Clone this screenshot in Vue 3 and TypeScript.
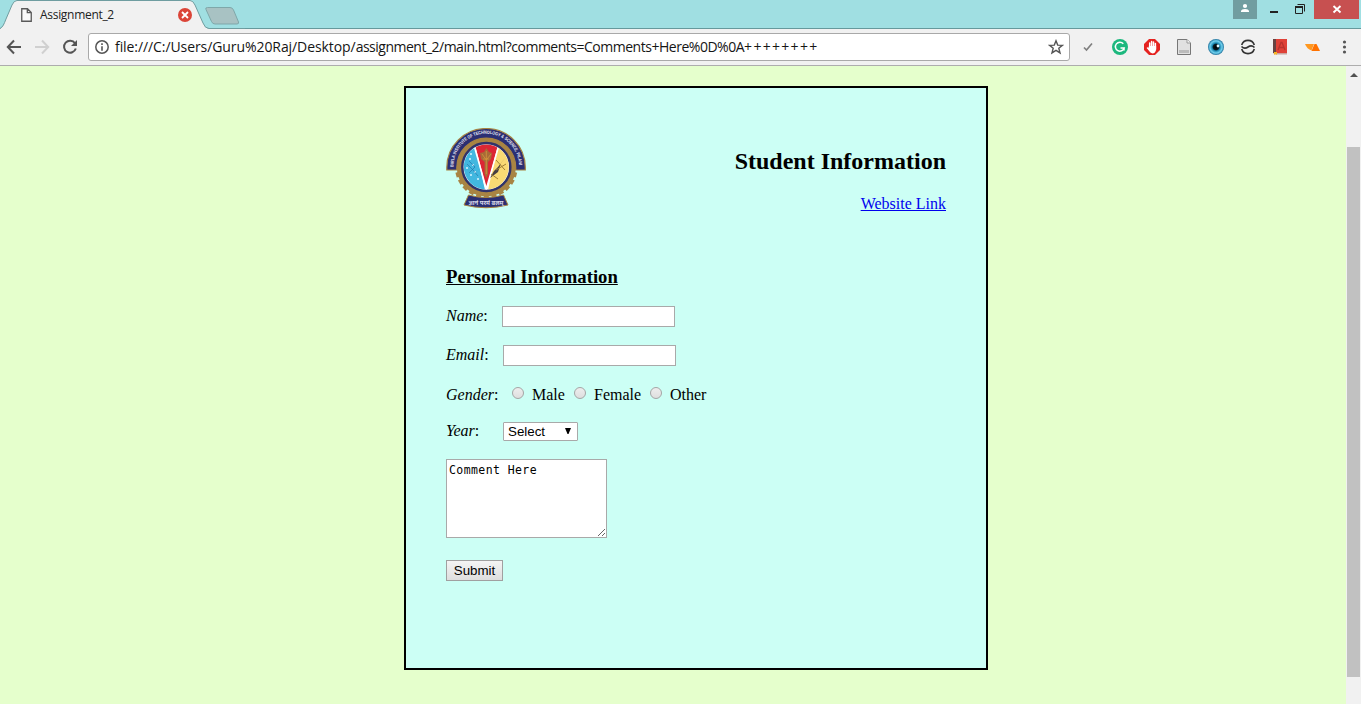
<script setup lang="ts">
import { ref } from 'vue'

const name = ref('')
const email = ref('')
const gender = ref('')
const comment = ref('Comment Here')
const genders: string[] = ['Male', 'Female', 'Other']
const teeth: number[] = Array.from({ length: 24 }, (_, i) => i * 15)
const url = {
  folder: 'file:///C:/Users/Guru%20Raj/Desktop/',
  file: 'assignment_2/main.html?comments=',
  value: 'Comments+Here%0D%0A',
  tail: '++++++++'
}
</script>

<template>
  <div class="window">
    <header class="titlebar">
      <div class="tab">
        <svg class="tab-shape" width="245" height="29" viewBox="0 0 245 29">
          <path d="M0 29 C3 27 4 24 6 19 L12 5 Q14 .5 17 .5 H190 Q193 .5 195 5 L203 23 Q205 28.500 209 28.500 L209 30 H0Z" fill="#f1f1f1" />
          <path d="M0 28.500 C3 27 4 24 6 19 L12 5 Q14 .5 17 .5 H190 Q193 .5 195 5 L203 23 Q205 28.500 209 28.500 H245" fill="none" stroke="#6f9da0" />
          <path d="M207.500 7.500 H230 Q232.500 7.500 233.500 10 L238.500 22 Q239 24 237 24 H215 Q212.500 24 211.500 21.500 L206 9.500 Q205 7.500 207.500 7.500Z" fill="#a8c2c3" stroke="#7fa7a9" />
        </svg>
        <svg class="page-icon" width="11" height="15" viewBox="0 0 11 15"><path d="M.75 .75 H6.500 L10.250 4.500 V13.250 H.75Z M6.300 .75 V4.700 H10.250" fill="#fafafa" stroke="#595959" stroke-width="1.300" /></svg>
        <span class="tab-title">Assignment_2</span>
        <svg class="tab-close" width="14" height="14" viewBox="0 0 14 14"><circle cx="7" cy="7" r="7" fill="#db4437" /><path d="M4 4 L10 10 M10 4 L4 10" stroke="#fff" stroke-width="1.800" /></svg>
      </div>
      <div class="controls">
        <div class="person"><svg width="24" height="19" viewBox="0 0 24 19"><circle cx="12" cy="6" r="2.100" fill="#fff" /><path d="M8 12 V11 Q8.500 9 12 9 T16 11 V12Z" fill="#fff" /></svg></div>
        <svg width="57" height="19" viewBox="0 0 57 19"><path d="M13 11 H21 V13 H13Z" fill="#222" /><path d="M38.500 6.500 H45.500 V13.500 H38.500Z M40.500 4.500 H47.500 V11.500" fill="none" stroke="#222" /><path d="M38 6 H46 V8 H38Z" fill="#222" /></svg>
        <div class="close"><svg width="45" height="19" viewBox="0 0 45 19"><path d="M19.500 6 L26.500 12.500 M26.500 6 L19.500 12.500" stroke="#fff" stroke-width="1.900" /></svg></div>
      </div>
    </header>

    <nav class="toolbar">
      <svg class="nav-icons" width="88" height="36" viewBox="0 0 88 36" fill="none" stroke-width="2">
        <path d="M21 18 H8 M14 11.500 L7.800 18 L14 24.500" stroke="#555" />
        <path d="M35 18 H48 M42 11.500 L48.200 18 L42 24.500" stroke="#d0d0d0" />
        <path d="M75 14.300 A6 6 0 1 0 75.800 19.500" stroke="#555" /><path d="M77 11 V17 H71Z" fill="#555" />
      </svg>
      <div class="omnibox">
        <svg class="info" width="14" height="14" viewBox="0 0 14 14"><circle cx="7" cy="7" r="6.200" fill="none" stroke="#555" stroke-width="1.500" /><path d="M6.200 6.200 H7.800 V10.700 H6.200Z M6.200 3.300 H7.800 V5 H6.200Z" fill="#555" /></svg>
        <div class="url"><span class="folder">{{ url.folder }}</span><span class="file">{{ url.file }}</span><span class="value">{{ url.value }}</span><span class="tail">{{ url.tail }}</span></div>
        <svg class="star" width="16" height="16" viewBox="0 0 16 16"><path d="M8 1.800 L9.700 6.100 L14.300 6.400 L10.800 9.300 L12 13.900 L8 11.300 L4 13.900 L5.200 9.300 L1.700 6.400 L6.300 6.100Z" fill="none" stroke="#555" stroke-width="1.400" /></svg>
      </div>
      <svg class="extensions" width="291" height="36" viewBox="1070 29 291 36">
        <defs>
          <radialGradient id="eye"><stop offset="0" stop-color="#000" /><stop offset=".35" stop-color="#061923" /><stop offset=".48" stop-color="#1684ae" /><stop offset=".76" stop-color="#72d1ef" /><stop offset="1" stop-color="#1b6d97" /></radialGradient>
        </defs>
        <path d="M1084 47.500 L1086.500 50 L1092 43.500" fill="none" stroke="#808080" stroke-width="1.700" />
        <circle cx="1120" cy="47" r="8" fill="#1cb87e" /><path d="M1123.300 43.700 A4.500 4.500 0 1 0 1124.200 48 H1120.500 M1124 48 V50.500" fill="none" stroke="#fff" stroke-width="1.500" />
        <path d="M1149 39 H1155 L1160 44 V50 L1155 55 H1149 L1144 50 V44Z" fill="#e52320" />
        <path d="M1149.500 50 L1147.500 48 M1149.700 48 V43 M1151.600 48 V41.500 M1153.500 48 V42 M1155.400 49 V43.500" stroke="#fff" stroke-width="1.500" stroke-linecap="round" /><path d="M1149 46 H1156.100 V50 Q1155 53.500 1152.500 53.500 Q1150 53 1148 49Z" fill="#fff" />
        <path d="M1177.500 39.500 H1187 L1190.500 43 V54.500 H1177.500Z" fill="#e1e1e1" stroke="#777" /><path d="M1187 39.500 V43 H1190.500" fill="#f8f8f8" stroke="#999" /><path d="M1179 50 H1189 V53 H1179Z" fill="#bbb" />
        <circle cx="1216" cy="47" r="8" fill="url(#eye)" /><circle cx="1218" cy="46" r="1.400" fill="#dff7ff" />
        <g fill="none" stroke="#333" stroke-width="1.600"><path d="M1241.700 45 A6.600 6.600 0 0 1 1254.300 45 M1241.700 49 A6.600 6.600 0 0 0 1254.300 49" /><path d="M1241.500 46.500 Q1244.500 49.500 1248 47 T1254.500 47.500" /></g>
        <path d="M1273 39 H1276 V53 H1273Z" fill="#674342" /><path d="M1276 39 H1287 V53 H1276Z" fill="#df4137" /><path d="M1273 53 H1287 V54.500 H1275 L1273 53Z" fill="#caa5a0" /><path d="M1274 52 H1277 V55 L1275.500 54 L1274 55Z" fill="#f9b522" /><path d="M1278 50 L1281 42.500 H1282 L1285 50 M1279.500 47.500 H1283.500" fill="none" stroke="#b8322d" stroke-width="1.300" />
        <path d="M1305 44 H1314 L1311.500 50.500 Q1307 49 1305 44Z" fill="#ff9820" /><path d="M1314.500 44 H1316.500 L1320 51 H1311.500Z" fill="#ff7200" />
        <g fill="#555"><circle cx="1344.500" cy="42" r="1.600" /><circle cx="1344.500" cy="47" r="1.600" /><circle cx="1344.500" cy="52" r="1.600" /></g>
      </svg>
    </nav>

    <div class="viewport">
      <main class="page">
        <form class="card" @submit.prevent>
          <div class="heading">
            <svg class="crest" width="80" height="81" viewBox="0 1 80 81">
              <defs><path id="top-arc" d="M7.800 43 A32.700 32.700 0 1 1 72.800 43" /><clipPath id="disc"><circle cx="40.300" cy="40" r="22.500" /></clipPath></defs>
              <g fill="#a88443"><rect v-for="t in teeth" :key="t" x="37.800" y="8.700" width="5" height="6" :transform="`rotate(${t} 40.300 40)`" /></g>
              <circle cx="40.300" cy="40" r="27" fill="none" stroke="#a88443" stroke-width="5" />
              <circle cx="40.300" cy="40" r="24" fill="#fff" stroke="#30336a" stroke-width="2.500" />
              <g clip-path="url(#disc)">
                <path d="M10 10 H27 L39 63 H10Z" fill="#42b7df" /><path d="M71 10 H54 L42 63 H71Z" fill="#f9da74" />
                <path d="M28 14 H53 L40.500 62Z" fill="#dc2634" /><path d="M28 18 L40.300 62 L53 18" fill="none" stroke="#fff" stroke-width="1.600" />
              </g>
              <g fill="#d8f5ff"><circle cx="24" cy="32" r="1" /><circle cx="27" cy="38" r="1" /><circle cx="21" cy="41" r="1" /><circle cx="29" cy="45" r="1" /><circle cx="25" cy="48" r="1" /><circle cx="32" cy="52" r="1" /><circle cx="25" cy="27" r="1" /></g>
              <path d="M23 34 L29 40 L23 46 M21 37 L27 43 L32 49" fill="none" stroke="#216ca5" stroke-width=".6" />
              <path d="M40.300 21 L43 25 L46 26 L45 32 L42 35 V47 L40.300 51 L38.600 47 V35 L35 32 L34 26 L38 25Z" fill="#a96a37" /><path d="M36 27 L40.300 33 L45 27 M37 32 L43 32 M40.300 24 V47" fill="none" stroke="#d4953c" stroke-width=".8" />
              <path d="M59 31 L55 36 L52 45 L44 51 L48 44 L52 40Z" fill="#453e43" /><path d="M50 43 L60 37 M50 33 L59 43 M45 47 L52 52" stroke="#a08035" stroke-width="1" />
              <path d="M.8 43 V40.500 A39.250 39 0 0 1 79.300 40.500 V43 H69.700 V40.500 A29.450 29.450 0 0 0 10.800 40.500 V43Z" fill="#2b2f73" stroke="#a88443" stroke-width="1.200" />
              <text class="crest-text" fill="#ececf6" textLength="102" lengthAdjust="spacingAndGlyphs"><textPath href="#top-arc" startOffset="3">BIRLA INSTITUTE OF TECHNOLOGY &amp; SCIENCE, PILANI</textPath></text>
              <path d="M22.500 68 Q40 73 57.500 68 L62 78 Q40 83.500 18 78Z" fill="#2b2f73" stroke="#a88443" />
              <text class="crest-motto" x="40" y="78" text-anchor="middle" fill="#d8d8e7" textLength="35" lengthAdjust="spacingAndGlyphs">ज्ञानं परमं बलम्</text>
            </svg>
            <div class="title"><h2>Student Information</h2><a href="#">Website Link</a></div>
          </div>
          <h3>Personal Information</h3>
          <div class="row name"><label><i>Name</i>:</label><input v-model="name" type="text" /></div>
          <div class="row email"><label><i>Email</i>:</label><input v-model="email" type="text" /></div>
          <div class="row gender"><label><i>Gender</i>:</label>
            <label v-for="g in genders" :key="g" class="option" :class="g.toLowerCase()"><input v-model="gender" type="radio" name="gender" :value="g" /><span>{{ g }}</span></label>
          </div>
          <div class="row year"><label><i>Year</i>:</label>
            <div class="select"><span>Select</span><svg width="8" height="7" viewBox="0 0 8 7"><path d="M1 0 H7 L4.500 6 H3.500Z" fill="#000" /></svg></div>
          </div>
          <div class="comment"><textarea v-model="comment" spellcheck="false" /><svg width="9" height="9" viewBox="0 0 9 9"><path d="M1 8 L8 1 M5 8 L8 5" stroke="#666" /></svg></div>
          <button>Submit</button>
        </form>
      </main>
      <aside class="scrollbar"><svg width="15" height="20" viewBox="0 0 15 20"><path d="M4 11 L8 7 L12 11Z" fill="#505050" /></svg><div class="thumb" /></aside>
    </div>
  </div>
</template>

<style>
body { margin: 0; overflow: hidden; }
</style>
<style scoped>
* { box-sizing: border-box; }
svg { display: block; flex: none; }
.window { width: 1361px; height: 704px; overflow: hidden; background: #e5ffcc; font-family: "Liberation Serif", serif; }
.titlebar { height: 29px; display: flex; justify-content: space-between; background: #a0dfe2; border-bottom: 1px solid #66999c; }
.tab { position: relative; width: 245px; height: 29px; display: flex; padding-left: 21px; }
.tab-shape { position: absolute; left: 0; top: 0; }
.page-icon { position: relative; margin-top: 8px; }
.tab-title { position: relative; width: 138px; margin: 6px 0 0 8px; font: 12px/17px "Open Sans", sans-serif; letter-spacing: -.3px; white-space: nowrap; color: #222; }
.tab-close { position: relative; margin-top: 8px; }
.controls { display: flex; height: 19px; }
.person { background: #719da0; width: 24px; }
.close { background: #c75050; width: 45px; margin-right: 2px; }
.toolbar { height: 37px; background: #f1f1f1; display: flex; border-bottom: 1px solid #adadad; }
.omnibox { width: 982px; height: 28px; margin-top: 4px; background: #fff; border: 1px solid #a9a9a9; border-radius: 3px; display: flex; align-items: center; padding: 0 5px 0 6px; }
.url { flex: 1; margin-left: 6px; font: 14px/20px "Open Sans", sans-serif; color: #151515; white-space: nowrap; }
.folder { letter-spacing: -.08px; }
.file { letter-spacing: -.5px; }
.value { letter-spacing: -.48px; }
.tail { letter-spacing: 1.3px; }
.viewport { height: 638px; display: flex; }
.page { width: 1346px; padding: 20px 0 0 404px; }
.card { width: 584px; height: 584px; border: 2px solid #000; background: #ccfff5; padding: 40px; }
.heading { display: flex; justify-content: space-between; height: 129px; }
.title { text-align: right; padding-top: 19px; }
h2 { margin: 0; font-size: 24px; line-height: 28px; height: 48px; white-space: nowrap; }
a { color: #0000ee; font-size: 16px; line-height: 18px; display: block; }
h3 { margin: 9px 0 0; font-size: 18.700px; line-height: 22px; height: 40px; text-decoration: underline; }
.row { display: flex; height: 39px; font-size: 16px; line-height: 20px; }
.row > label:first-child { width: 56px; }
.row.email > label:first-child, .row.year > label:first-child { width: 57px; }
.row input[type=text] { width: 173px; height: 21px; margin: 0; padding: 1px; border: 1px solid #a9a9a9; background: #fff; outline: none; }
.row.gender { height: 38px; padding-top: 1px; }
.row.gender > label:first-child { width: 66px; }
.option { display: flex; width: 62px; }
.option.female { width: 76px; }
.option input { appearance: none; flex: none; width: 12px; height: 12px; margin: 2px 8px 0 0; border: 1px solid #a5a5a5; border-radius: 50%; background: linear-gradient(#ededed, #dedede); }
.row.year { height: 37px; }
.row.year > label { margin-top: -1px; }
.select { width: 75px; height: 19px; display: flex; justify-content: space-between; padding: 5px 5px 0 4px; background: #fff; border: 1px solid #a9a9a9; border-radius: 1px; font: 13.333px/15px "Liberation Sans", sans-serif; }
.select span { margin-top: -4px; }
.comment { position: relative; width: 161px; height: 101px; }
textarea { display: block; width: 161px; height: 79px; padding: 2px; border: 1px solid #a9a9a9; background: #fff; resize: none; overflow: hidden; outline: none; font: 11.500px/16px "DejaVu Sans Mono", monospace; letter-spacing: .41px; color: #000; }
.comment svg { position: absolute; right: 1px; top: 69px; }
button { display: block; width: 57px; height: 21px; padding: 0; border: 1px solid #a0a0a0; background: linear-gradient(#f4f4f4, #dedede); font: 13.333px/15px "Liberation Sans", sans-serif; color: #000; }
.crest-text { font: bold 4.600px "Liberation Sans", sans-serif; }
.crest-motto { font: bold 6px "Noto Sans", sans-serif; }
.scrollbar { width: 15px; background: #f1f1f1; }
.thumb { width: 13px; height: 530px; margin: 61px 0 0 1px; background: #c1c1c1; }
</style>
